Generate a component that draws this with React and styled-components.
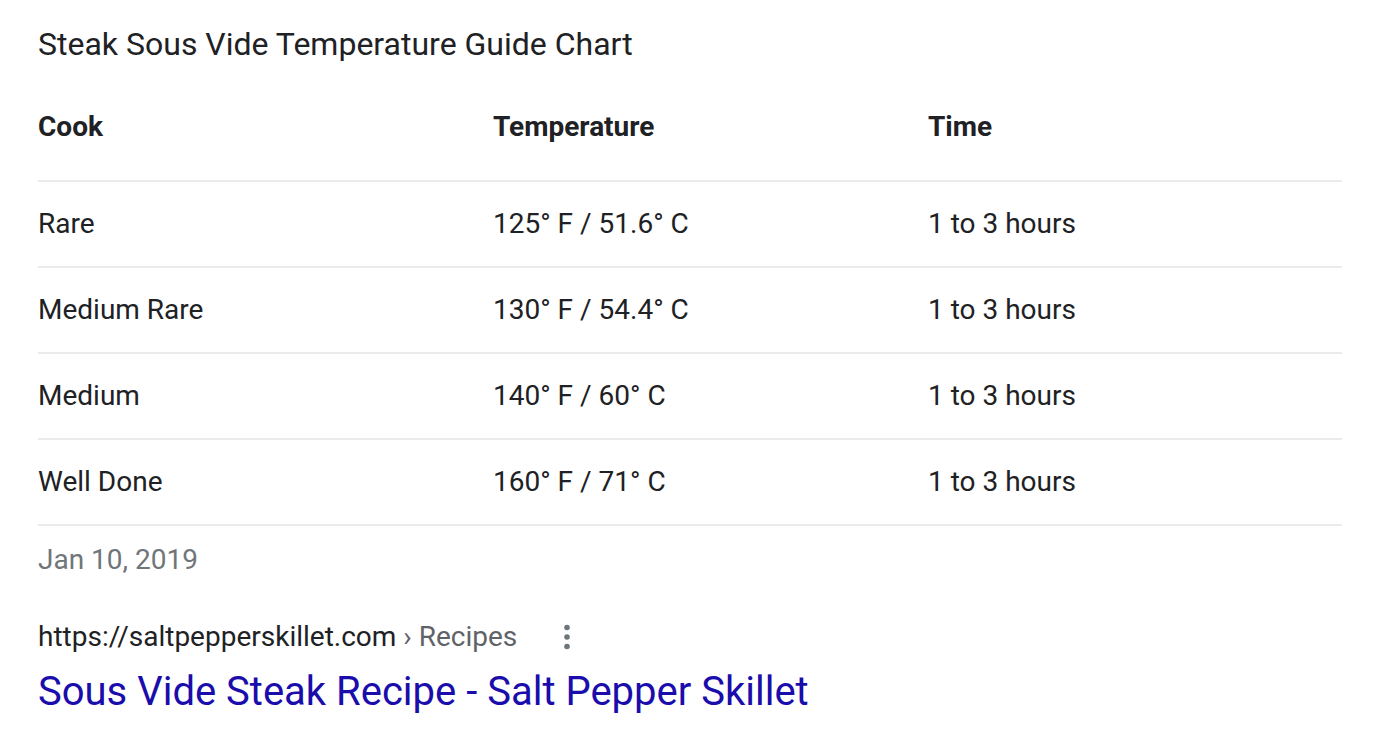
import React from 'react';
import styled, { createGlobalStyle } from 'styled-components';

const GlobalStyle = createGlobalStyle`
  body {
    margin: 0;
    background: #fff;
    font-family: Roboto, "Liberation Sans", Arial, sans-serif;
    color: #202124;
  }
`;

const Page = styled.div`
  padding: 24px 58px 0 38px;
  width: 1304px;
`;

const Heading = styled.div`
  font-size: 32px;
  line-height: 40px;
  color: #202124;
`;

const Table = styled.div`
  margin-top: 43px;
  display: flex;
  flex-direction: column;
`;

const Row = styled.div`
  display: grid;
  grid-template-columns: 455px 435px 1fr;
  height: ${p => (p.$head ? '73px' : '84px')};
  align-items: ${p => (p.$head ? 'start' : 'center')};
  border-bottom: 2px solid #ebebeb;
`;

const Cell = styled.div`
  font-size: 28px;
  line-height: 40px;
  font-weight: ${p => (p.$bold ? 700 : 400)};
  color: #202124;
`;

const DateLine = styled.div`
  margin-top: 16px;
  font-size: 28px;
  line-height: 36px;
  color: #70757a;
`;

const Source = styled.div`
  margin-top: 41px;
  display: flex;
  align-items: center;
  font-size: 28px;
  line-height: 36px;
  color: #202124;
`;

const Crumb = styled.span`
  color: #5f6368;
`;

const More = styled.span`
  display: inline-flex;
  margin-left: 45px;
  color: #70757a;
`;

const TitleLink = styled.a`
  display: block;
  margin-top: 13px;
  font-size: 40px;
  line-height: 48px;
  color: #1a0dab;
  text-decoration: none;
`;

const rows = [
  ['Rare', '125° F / 51.6° C', '1 to 3 hours'],
  ['Medium Rare', '130° F / 54.4° C', '1 to 3 hours'],
  ['Medium', '140° F / 60° C', '1 to 3 hours'],
  ['Well Done', '160° F / 71° C', '1 to 3 hours'],
];

export default function App() {
  return (
    <Page>
      <GlobalStyle />
      <Heading>Steak Sous Vide Temperature Guide Chart</Heading>
      <Table>
        <Row $head>
          <Cell $bold>Cook</Cell>
          <Cell $bold>Temperature</Cell>
          <Cell $bold>Time</Cell>
        </Row>
        {rows.map(r => (
          <Row key={r[0]}>
            <Cell>{r[0]}</Cell>
            <Cell>{r[1]}</Cell>
            <Cell>{r[2]}</Cell>
          </Row>
        ))}
      </Table>
      <DateLine>Jan 10, 2019</DateLine>
      <Source>
        https://saltpepperskillet.com<Crumb>&nbsp;› Recipes</Crumb>
        <More>
          <svg width="10" height="30" viewBox="0 0 10 30">
            <circle cx="5" cy="5.5" r="2.8" fill="currentColor" />
            <circle cx="5" cy="15" r="2.8" fill="currentColor" />
            <circle cx="5" cy="24.5" r="2.8" fill="currentColor" />
          </svg>
        </More>
      </Source>
      <TitleLink href="#">Sous Vide Steak Recipe - Salt Pepper Skillet</TitleLink>
    </Page>
  );
}
